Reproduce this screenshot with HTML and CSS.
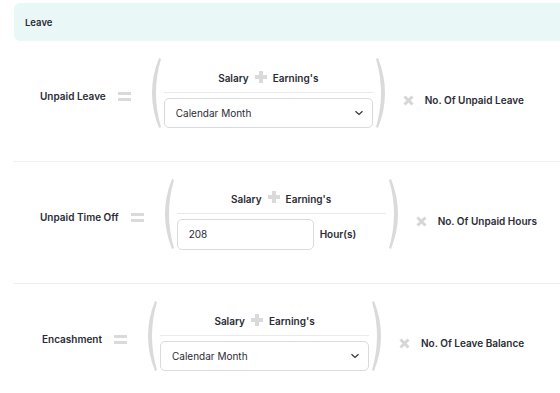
FILE: index.html
```html
<!DOCTYPE html>
<html lang="en">
<head>
    <meta charset="utf-8">
    <title>Leave</title>
    <link rel="stylesheet" href="styles.css">
</head>
<body>
    <div class="page">
        <div class="section-head">Leave</div>

        <!-- unpaid leave -->
        <div class="formula">
            <div class="label">Unpaid Leave</div>
            <div class="eq"></div>
            <svg class="paren" width="16" height="72" viewBox="0 0 16 72"><path d="M11 1 Q -3 36 11 71 L13 70 Q 3 36 13 2 Z" fill="#dadada"/></svg>
            <div class="inner">
                <div class="sum">Salary <span class="plus"></span> Earning's</div>
                <div class="dropdown">
                    <span>Calendar Month</span>
                    <svg width="10" height="6" viewBox="0 0 10 6"><path d="M1.5 1.2 L5 4.5 L8.5 1.2" fill="none" stroke="#333" stroke-width="1.2"/></svg>
                </div>
            </div>
            <svg class="paren" width="16" height="72" viewBox="0 0 16 72"><path d="M5 1 Q 19 36 5 71 L3 70 Q 13 36 3 2 Z" fill="#dadada"/></svg>
            <svg class="times" width="11" height="11" viewBox="0 0 11 11"><path d="M1.5 1.5 L9.5 9.5 M9.5 1.5 L1.5 9.5" stroke="#d6d6d6" stroke-width="3"/></svg>
            <div class="result">No. Of Unpaid Leave</div>
        </div>

        <!-- unpaid time off -->
        <div class="formula">
            <div class="label">Unpaid Time Off</div>
            <div class="eq"></div>
            <svg class="paren" width="16" height="72" viewBox="0 0 16 72"><path d="M11 1 Q -3 36 11 71 L13 70 Q 3 36 13 2 Z" fill="#dadada"/></svg>
            <div class="inner">
                <div class="sum">Salary <span class="plus"></span> Earning's</div>
                <div class="hours-row">
                    <div class="textbox">208</div>
                    <span class="unit">Hour(s)</span>
                </div>
            </div>
            <svg class="paren" width="16" height="72" viewBox="0 0 16 72"><path d="M5 1 Q 19 36 5 71 L3 70 Q 13 36 3 2 Z" fill="#dadada"/></svg>
            <svg class="times" width="11" height="11" viewBox="0 0 11 11"><path d="M1.5 1.5 L9.5 9.5 M9.5 1.5 L1.5 9.5" stroke="#d6d6d6" stroke-width="3"/></svg>
            <div class="result">No. Of Unpaid Hours</div>
        </div>

        <!-- encashment -->
        <div class="formula formula-last">
            <div class="label">Encashment</div>
            <div class="eq"></div>
            <svg class="paren" width="16" height="72" viewBox="0 0 16 72"><path d="M11 1 Q -3 36 11 71 L13 70 Q 3 36 13 2 Z" fill="#dadada"/></svg>
            <div class="inner">
                <div class="sum">Salary <span class="plus"></span> Earning's</div>
                <div class="dropdown">
                    <span>Calendar Month</span>
                    <svg width="10" height="6" viewBox="0 0 10 6"><path d="M1.5 1.2 L5 4.5 L8.5 1.2" fill="none" stroke="#333" stroke-width="1.2"/></svg>
                </div>
            </div>
            <svg class="paren" width="16" height="72" viewBox="0 0 16 72"><path d="M5 1 Q 19 36 5 71 L3 70 Q 13 36 3 2 Z" fill="#dadada"/></svg>
            <svg class="times" width="11" height="11" viewBox="0 0 11 11"><path d="M1.5 1.5 L9.5 9.5 M9.5 1.5 L1.5 9.5" stroke="#d6d6d6" stroke-width="3"/></svg>
            <div class="result">No. Of Leave Balance</div>
        </div>
    </div>
</body>
</html>
```

FILE: styles.css
```css
body {
    margin: 0;
    background: #ffffff;
    font-family: Inter, "Noto Sans", sans-serif;
    color: #2a2b36;
    overflow: hidden;
}

.page {
    padding: 3px 0 0 14px;
}

.section-head {
    height: 38px;
    display: flex;
    align-items: center;
    padding-left: 11px;
    margin-right: -10px;
    background: #e9f7f7;
    border-radius: 6px;
    font-size: 9.5px;
    font-weight: 600;
}

.formula {
    display: flex;
    align-items: center;
    padding: 16px 0 32px 26px;
    border-bottom: 1px solid #eeeeee;
}

.formula + .formula {
    padding-top: 16px;
    padding-bottom: 33px;
}

.formula-last {
    padding-left: 28px;
    border-bottom: none;
}

.label {
    font-size: 10px;
    font-weight: 600;
    padding-top: 6px;
    white-space: nowrap;
}

.eq {
    width: 13px;
    height: 9px;
    margin: 6px 17px 0 12px;
    border-top: 3px solid #dadada;
    border-bottom: 3px solid #dadada;
    box-sizing: border-box;
}

.paren {
    flex: none;
    display: block;
}

.inner {
    width: 209px;
    display: flex;
    flex-direction: column;
    margin-top: 1px;
}

.sum {
    height: 34px;
    display: flex;
    align-items: center;
    justify-content: center;
    padding-top: 5px;
    box-sizing: border-box;
    border-bottom: 1px solid #e9e9e9;
    font-size: 10px;
    font-weight: 600;
    margin-bottom: 5px;
}

.plus {
    position: relative;
    width: 12px;
    height: 12px;
    margin: -3px 6px 0 6px;
}

.plus::before,
.plus::after {
    content: "";
    position: absolute;
    background: #dadada;
}

.plus::before {
    left: 4px;
    top: 0;
    width: 4px;
    height: 12px;
}

.plus::after {
    left: 0;
    top: 4px;
    width: 12px;
    height: 4px;
}

.dropdown {
    height: 30px;
    border: 1px solid #d7dbe0;
    border-radius: 5px;
    box-sizing: border-box;
    display: flex;
    align-items: center;
    justify-content: space-between;
    padding: 0 8px 0 11px;
    font-size: 10px;
}

.dropdown svg {
    display: block;
}

.hours-row {
    display: flex;
    align-items: center;
}

.textbox {
    width: 137px;
    height: 31px;
    border: 1px solid #d7dbe0;
    border-radius: 5px;
    box-sizing: border-box;
    display: flex;
    align-items: center;
    padding-left: 11px;
    font-size: 10px;
}

.unit {
    margin-left: 6px;
    font-size: 10px;
    font-weight: 600;
}

.times {
    flex: none;
    display: block;
    margin: 14px 11px 0 14px;
}

.result {
    padding-top: 14px;
    font-size: 10px;
    font-weight: 600;
    white-space: nowrap;
}
```
